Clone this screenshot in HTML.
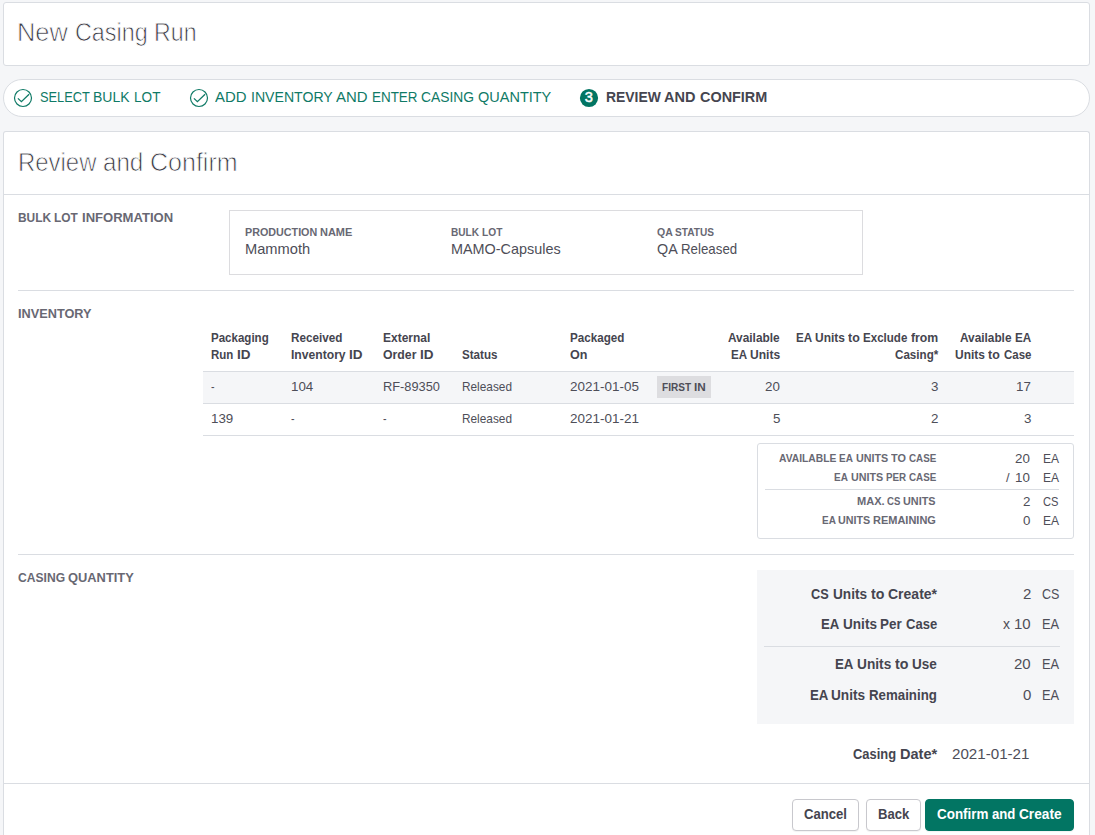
<!DOCTYPE html>
<html lang="en">
<head>
<meta charset="utf-8">
<title>New Casing Run</title>
<style>
*{box-sizing:border-box;margin:0;padding:0}
html,body{width:1095px;height:835px;overflow:hidden}
body{background:#f5f6f8;font-family:"Liberation Sans",sans-serif;color:#4e4e58;position:relative}
.tx{display:inline-block;white-space:nowrap}
.t{display:inline-block;white-space:pre;transform-origin:0 0}
.fx{display:flex;flex-direction:column;align-items:flex-start}
.ra>.fx,.ra9>.fx{align-items:flex-end}
.abs{position:absolute;white-space:nowrap}
.panel{position:absolute;left:3px;width:1087px;background:#fff;border:1px solid #dadde2;border-radius:3px}
#top{top:2px;height:64px}
h1,h2{font-weight:400;font-size:25px;line-height:30px;color:#383842;-webkit-text-stroke:0.75px #fff;paint-order:fill stroke;position:absolute;left:14px;white-space:nowrap}
h1{top:14px;left:12.8px}
h2{top:15px}
#steps{position:absolute;left:3px;top:79px;width:1087px;height:38px;background:#fff;border:1px solid #dadde2;border-radius:19px}
.step{position:absolute;top:8px;height:18px;line-height:18px;font-size:14.4px;color:#0f7a66;white-space:nowrap}
.step svg{position:absolute;top:0}
.step.cur{color:#45454f;font-weight:700}
#main{top:131px;height:720px;border-bottom:none;border-radius:3px 3px 0 0}
.hline{position:absolute;height:1px;background:#dadde2}
.sect{position:absolute;left:14px;font-size:12.8px;line-height:15px;font-weight:700;color:#686873;white-space:nowrap}
#bulk{position:absolute;left:225px;top:78px;width:634px;height:65px;border:1px solid #dcdcdf}
.fl{position:absolute;top:15px;font-size:11px;font-weight:700;color:#686873;white-space:nowrap;line-height:12px}
.fv{position:absolute;top:29px;font-size:14.4px;color:#4e4e58;white-space:nowrap;line-height:18px}
#inv{position:absolute;left:199px;top:194px;width:871px;table-layout:fixed;font-size:12.8px;border-collapse:separate;border-spacing:0}
#inv th{font-weight:700;color:#45454f;text-align:left;vertical-align:bottom;padding:0 0 8px 8px;line-height:16.5px;height:46px;border-bottom:1px solid #dadde2;white-space:nowrap}
#inv td{height:32px;padding:7px 0 0 8px;border-bottom:1px solid #dadde2;color:#4e4e58;white-space:nowrap;vertical-align:top;line-height:15px}
#inv tr.odd td{background:#f5f6f8}
#inv .ra{text-align:right;padding-right:8px;padding-left:0}
#inv .ra9{text-align:right;padding-right:43px;padding-left:0}
#inv td.bd{padding-top:4px}
.badge{display:block;width:54px;height:22px;line-height:22px;background:#dddde0;font-size:11px;font-weight:700;color:#4e4e58;padding-left:5px}
#sum{position:absolute;left:753px;top:311px;width:317px;height:96px;border:1px solid #dadde2;border-radius:3px}
.sl{position:absolute;right:137px;font-size:11px;font-weight:700;color:#686873;white-space:nowrap;line-height:12px}
.sv{position:absolute;right:43px;font-size:12.8px;color:#4e4e58;white-space:nowrap;line-height:15px}
.su{position:absolute;left:285px;font-size:12.8px;color:#4e4e58;white-space:nowrap;line-height:15px}
#cq{position:absolute;left:753px;top:438px;width:317px;height:154px;background:#f5f6f8}
#cq .sl{font-size:14.4px;color:#45454f;line-height:18px}
#cq .sv,#cq .su,.cd{font-size:14.4px;line-height:18px}
#cq .sv{right:43px}
#cq .su{left:285px}
.btn{position:absolute;top:667px;height:32px;line-height:28px;border:1px solid #c8c8cd;border-radius:4px;background:#fff;color:#45454f;font-size:14.4px;font-weight:700;padding-left:11px;white-space:nowrap;box-shadow:0 1px 1px rgba(0,0,0,.05)}
.btn.go{background:#027563;border-color:#027563;color:#fff}
</style>
</head>
<body>
<div class="panel" id="top"><h1><span class="tx"><span class="t" style="transform:scaleX(1.0159);margin-right:0.91px">New </span><span class="t" style="transform:scaleX(0.9343);margin-right:-5.57px">Casing </span><span class="t" style="transform:scaleX(0.9271);margin-right:-3.34px">Run</span></span></h1></div>

<div id="steps">
  <div class="step" style="left:36px">
    <svg style="left:-27px" width="20" height="20" viewBox="0 0 20 20"><circle cx="10" cy="10" r="8.5" fill="none" stroke="#0f7a66" stroke-width="1.2"/><path d="M4.9 10.4l3.5 3.3L16.1 6.2" fill="none" stroke="#0f7a66" stroke-width="1.3"/></svg>
    <span class="tx"><span class="t" style="transform:scaleX(0.8901);margin-right:-6.59px">SELECT </span><span class="t" style="transform:scaleX(0.9736);margin-right:-1.1px">BULK </span><span class="t" style="transform:scaleX(0.9456);margin-right:-1.52px">LOT</span></span></div>
  <div class="step" style="left:211px">
    <svg style="left:-26px" width="20" height="20" viewBox="0 0 20 20"><circle cx="10" cy="10" r="8.5" fill="none" stroke="#0f7a66" stroke-width="1.2"/><path d="M4.9 10.4l3.5 3.3L16.1 6.2" fill="none" stroke="#0f7a66" stroke-width="1.3"/></svg>
    <span class="tx"><span class="t" style="transform:scaleX(1.0369);margin-right:1.27px">ADD </span><span class="t" style="transform:scaleX(0.9802);margin-right:-1.73px">INVENTORY </span><span class="t" style="transform:scaleX(1.0382);margin-right:1.31px">AND </span><span class="t" style="transform:scaleX(0.9336);margin-right:-3.5px">ENTER </span><span class="t" style="transform:scaleX(0.9618);margin-right:-2.26px">CASING </span><span class="t" style="transform:scaleX(1.0074);margin-right:0.54px">QUANTITY</span></span></div>
  <div class="step cur" style="left:601.5px">
    <svg style="left:-26.5px" width="20" height="20" viewBox="0 0 20 20"><circle cx="10" cy="10" r="9.1" fill="#027563"/><text x="9.8" y="13.8" text-anchor="middle" font-family="Liberation Sans, sans-serif" font-size="14.6" font-weight="400" fill="#fff" stroke="#fff" stroke-width="0.5">3</text></svg>
    <span class="tx"><span class="t" style="transform:scaleX(0.9657);margin-right:-2.08px">REVIEW </span><span class="t" style="transform:scaleX(1.0099);margin-right:0.35px">AND </span><span class="t" style="transform:scaleX(1.0019);margin-right:0.13px">CONFIRM</span></span></div>
</div>

<div class="panel" id="main">
  <h2><span class="tx"><span class="t" style="transform:scaleX(0.9572);margin-right:-3.8px">Review </span><span class="t" style="transform:scaleX(0.9644);margin-right:-1.73px">and </span><span class="t" style="transform:scaleX(1.0008);margin-right:0.07px">Confirm</span></span></h2>
  <div class="hline" style="left:0;top:62px;width:1085px"></div>

  <div class="sect" style="top:78px"><span class="tx"><span class="t" style="transform:scaleX(0.9325);margin-right:-2.64px">BULK </span><span class="t" style="transform:scaleX(0.9311);margin-right:-2.01px">LOT </span><span class="t" style="transform:scaleX(1.0202);margin-right:1.8px">INFORMATION</span></span></div>
  <div id="bulk">
    <div class="fl" style="left:15px"><span class="tx"><span class="t" style="transform:scaleX(0.9769);margin-right:-1.78px">PRODUCTION </span><span class="t" style="transform:scaleX(0.9986);margin-right:-0.04px">NAME</span></span></div><div class="fv" style="left:15px"><span class="tx"><span class="t" style="transform:scaleX(1.0190);margin-right:1.22px">Mammoth</span></span></div>
    <div class="fl" style="left:221px"><span class="tx"><span class="t" style="transform:scaleX(0.9185);margin-right:-2.74px">BULK </span><span class="t" style="transform:scaleX(0.9249);margin-right:-1.65px">LOT</span></span></div><div class="fv" style="left:221px"><span class="tx"><span class="t" style="transform:scaleX(1.0008);margin-right:0.09px">MAMO-Capsules</span></span></div>
    <div class="fl" style="left:427px"><span class="tx"><span class="t" style="transform:scaleX(0.9549);margin-right:-0.88px">QA </span><span class="t" style="transform:scaleX(0.9189);margin-right:-3.44px">STATUS</span></span></div><div class="fv" style="left:427px"><span class="tx"><span class="t" style="transform:scaleX(0.9952);margin-right:-0.12px">QA </span><span class="t" style="transform:scaleX(0.9240);margin-right:-4.62px">Released</span></span></div>
  </div>
  <div class="hline" style="left:14px;top:158px;width:1056px"></div>

  <div class="sect" style="top:174px"><span class="tx"><span class="t" style="transform:scaleX(0.9948);margin-right:-0.39px">INVENTORY</span></span></div>
  <table id="inv">
    <colgroup><col style="width:80px"><col style="width:92px"><col style="width:79px"><col style="width:108px"><col style="width:87px"><col style="width:71px"><col style="width:68px"><col style="width:158px"><col style="width:128px"></colgroup>
    <thead><tr>
      <th><div class="fx"><span class="tx"><span class="t" style="transform:scaleX(0.9014);margin-right:-6.31px">Packaging</span></span><span class="tx"><span class="t" style="transform:scaleX(0.8975);margin-right:-2.91px">Run </span><span class="t" style="transform:scaleX(1.0570);margin-right:0.73px">ID</span></span></div></th>
      <th><div class="fx"><span class="tx"><span class="t" style="transform:scaleX(0.9149);margin-right:-4.78px">Received</span></span><span class="tx"><span class="t" style="transform:scaleX(0.9480);margin-right:-3.18px">Inventory </span><span class="t" style="transform:scaleX(1.0570);margin-right:0.73px">ID</span></span></div></th>
      <th><div class="fx"><span class="tx"><span class="t" style="transform:scaleX(0.9356);margin-right:-3.25px">External</span></span><span class="tx"><span class="t" style="transform:scaleX(0.9585);margin-right:-1.59px">Order </span><span class="t" style="transform:scaleX(1.0570);margin-right:0.73px">ID</span></span></div></th>
      <th><div class="fx"><span class="tx"><span class="t" style="transform:scaleX(0.9078);margin-right:-3.6px">Status</span></span></div></th>
      <th><div class="fx"><span class="tx"><span class="t" style="transform:scaleX(0.9114);margin-right:-5.3px">Packaged</span></span><span class="tx"><span class="t" style="transform:scaleX(0.9819);margin-right:-0.32px">On</span></span></div></th>
      <th></th>
      <th class="ra"><div class="fx"><span class="tx"><span class="t" style="transform:scaleX(0.9268);margin-right:-4.08px">Available</span></span><span class="tx"><span class="t" style="transform:scaleX(0.9073);margin-right:-1.98px">EA </span><span class="t" style="transform:scaleX(0.9422);margin-right:-1.85px">Units</span></span></div></th>
      <th class="ra"><div class="fx"><span class="tx"><span class="t" style="transform:scaleX(0.9073);margin-right:-1.98px">EA </span><span class="t" style="transform:scaleX(0.9354);margin-right:-2.29px">Units </span><span class="t" style="transform:scaleX(0.9704);margin-right:-0.46px">to </span><span class="t" style="transform:scaleX(0.9028);margin-right:-5.12px">Exclude </span><span class="t" style="transform:scaleX(0.9581);margin-right:-1.19px">from</span></span><span class="tx"><span class="t" style="transform:scaleX(0.9077);margin-right:-4.4px">Casing*</span></span></div></th>
      <th class="ra9"><div class="fx"><span class="tx"><span class="t" style="transform:scaleX(0.9237);margin-right:-4.52px">Available </span><span class="t" style="transform:scaleX(0.9139);margin-right:-1.53px">EA</span></span><span class="tx"><span class="t" style="transform:scaleX(0.9354);margin-right:-2.29px">Units </span><span class="t" style="transform:scaleX(0.9704);margin-right:-0.46px">to </span><span class="t" style="transform:scaleX(0.8962);margin-right:-3.18px">Case</span></span></div></th>
    </tr></thead>
    <tbody>
      <tr class="odd"><td><span class="tx"><span class="t" style="transform:scaleX(0.8367);margin-right:-0.7px">-</span></span></td><td><span class="tx"><span class="t" style="transform:scaleX(1.0429);margin-right:0.92px">104</span></span></td><td><span class="tx"><span class="t" style="transform:scaleX(1.0005);margin-right:0.03px">RF-89350</span></span></td><td><span class="tx"><span class="t" style="transform:scaleX(0.9240);margin-right:-4.11px">Released</span></span></td><td><span class="tx"><span class="t" style="transform:scaleX(1.0523);margin-right:3.43px">2021-01-05</span></span></td><td class="bd"><span class="badge"><span class="tx"><span class="t" style="transform:scaleX(0.9149);margin-right:-2.96px">FIRST </span><span class="t" style="transform:scaleX(1.0670);margin-right:0.74px">IN</span></span></span></td><td class="ra"><span class="tx"><span class="t" style="transform:scaleX(1.0429);margin-right:0.61px">20</span></span></td><td class="ra"><span class="tx"><span class="t" style="transform:scaleX(1.0429);margin-right:0.31px">3</span></span></td><td class="ra9"><span class="tx"><span class="t" style="transform:scaleX(1.0429);margin-right:0.61px">17</span></span></td></tr>
      <tr><td><span class="tx"><span class="t" style="transform:scaleX(1.0429);margin-right:0.92px">139</span></span></td><td><span class="tx"><span class="t" style="transform:scaleX(0.8367);margin-right:-0.7px">-</span></span></td><td><span class="tx"><span class="t" style="transform:scaleX(0.8367);margin-right:-0.7px">-</span></span></td><td><span class="tx"><span class="t" style="transform:scaleX(0.9240);margin-right:-4.11px">Released</span></span></td><td><span class="tx"><span class="t" style="transform:scaleX(1.0523);margin-right:3.43px">2021-01-21</span></span></td><td></td><td class="ra"><span class="tx"><span class="t" style="transform:scaleX(1.0429);margin-right:0.31px">5</span></span></td><td class="ra"><span class="tx"><span class="t" style="transform:scaleX(1.0429);margin-right:0.31px">2</span></span></td><td class="ra9"><span class="tx"><span class="t" style="transform:scaleX(1.0429);margin-right:0.31px">3</span></span></td></tr>
    </tbody>
  </table>

  <div id="sum">
    <div class="sl" style="top:8px"><span class="tx"><span class="t" style="transform:scaleX(0.9357);margin-right:-4.14px">AVAILABLE </span><span class="t" style="transform:scaleX(0.9073);margin-right:-1.7px">EA </span><span class="t" style="transform:scaleX(0.9761);margin-right:-0.86px">UNITS </span><span class="t" style="transform:scaleX(0.9870);margin-right:-0.24px">TO </span><span class="t" style="transform:scaleX(0.8925);margin-right:-3.29px">CASE</span></span></div><div class="sv" style="top:7px"><span class="tx"><span class="t" style="transform:scaleX(1.0429);margin-right:0.61px">20</span></span></div><div class="su" style="top:7px"><span class="tx"><span class="t" style="transform:scaleX(0.9404);margin-right:-1.02px">EA</span></span></div>
    <div class="sl" style="top:27px"><span class="tx"><span class="t" style="transform:scaleX(0.9073);margin-right:-1.7px">EA </span><span class="t" style="transform:scaleX(0.9761);margin-right:-0.86px">UNITS </span><span class="t" style="transform:scaleX(0.8912);margin-right:-2.79px">PER </span><span class="t" style="transform:scaleX(0.8925);margin-right:-3.29px">CASE</span></span></div><div class="sv" style="top:26px"><span class="tx"><span class="t" style="transform:scaleX(1.0000);margin-right:1.95px">/ </span><span class="t" style="transform:scaleX(1.0429);margin-right:0.61px">10</span></span></div><div class="su" style="top:26px"><span class="tx"><span class="t" style="transform:scaleX(0.9404);margin-right:-1.02px">EA</span></span></div>
    <div class="hline" style="left:7px;top:45px;width:294px"></div>
    <div class="sl" style="top:51px"><span class="tx"><span class="t" style="transform:scaleX(1.0046);margin-right:0.14px">MAX. </span><span class="t" style="transform:scaleX(0.8716);margin-right:-2.35px">CS </span><span class="t" style="transform:scaleX(0.9855);margin-right:-0.48px">UNITS</span></span></div><div class="sv" style="top:50px"><span class="tx"><span class="t" style="transform:scaleX(1.0429);margin-right:0.31px">2</span></span></div><div class="su" style="top:50px"><span class="tx"><span class="t" style="transform:scaleX(0.8714);margin-right:-2.29px">CS</span></span></div>
    <div class="sl" style="top:70px"><span class="tx"><span class="t" style="transform:scaleX(0.9073);margin-right:-1.7px">EA </span><span class="t" style="transform:scaleX(0.9761);margin-right:-0.86px">UNITS </span><span class="t" style="transform:scaleX(0.9992);margin-right:-0.05px">REMAINING</span></span></div><div class="sv" style="top:69px"><span class="tx"><span class="t" style="transform:scaleX(1.0429);margin-right:0.31px">0</span></span></div><div class="su" style="top:69px"><span class="tx"><span class="t" style="transform:scaleX(0.9404);margin-right:-1.02px">EA</span></span></div>
  </div>
  <div class="hline" style="left:14px;top:422px;width:1056px"></div>

  <div class="sect" style="top:437.5px"><span class="tx"><span class="t" style="transform:scaleX(0.9456);margin-right:-2.9px">CASING </span><span class="t" style="transform:scaleX(1.0061);margin-right:0.4px">QUANTITY</span></span></div>
  <div id="cq">
    <div class="sl" style="top:15px"><span class="tx"><span class="t" style="transform:scaleX(0.8847);margin-right:-2.77px">CS </span><span class="t" style="transform:scaleX(0.9495);margin-right:-2.02px">Units </span><span class="t" style="transform:scaleX(0.9849);margin-right:-0.26px">to </span><span class="t" style="transform:scaleX(0.9730);margin-right:-1.36px">Create*</span></span></div><div class="sv" style="top:15px"><span class="tx"><span class="t" style="transform:scaleX(1.0429);margin-right:0.34px">2</span></span></div><div class="su" style="top:15px"><span class="tx"><span class="t" style="transform:scaleX(0.8714);margin-right:-2.57px">CS</span></span></div>
    <div class="sl" style="top:45px"><span class="tx"><span class="t" style="transform:scaleX(0.9164);margin-right:-2.01px">EA </span><span class="t" style="transform:scaleX(0.9448);margin-right:-2.21px">Units </span><span class="t" style="transform:scaleX(0.9327);margin-right:-1.83px">Per </span><span class="t" style="transform:scaleX(0.9052);margin-right:-3.26px">Case</span></span></div><div class="sv" style="top:45px"><span class="tx"><span class="t" style="transform:scaleX(0.9694);margin-right:-0.34px">x </span><span class="t" style="transform:scaleX(1.0429);margin-right:0.69px">10</span></span></div><div class="su" style="top:45px"><span class="tx"><span class="t" style="transform:scaleX(0.8934);margin-right:-2.05px">EA</span></span></div>
    <div class="hline" style="left:7px;top:76px;width:296px"></div>
    <div class="sl" style="top:85px"><span class="tx"><span class="t" style="transform:scaleX(0.9236);margin-right:-1.83px">EA </span><span class="t" style="transform:scaleX(0.9523);margin-right:-1.91px">Units </span><span class="t" style="transform:scaleX(0.9878);margin-right:-0.21px">to </span><span class="t" style="transform:scaleX(0.9403);margin-right:-1.58px">Use</span></span></div><div class="sv" style="top:85px"><span class="tx"><span class="t" style="transform:scaleX(1.0429);margin-right:0.69px">20</span></span></div><div class="su" style="top:85px"><span class="tx"><span class="t" style="transform:scaleX(0.8934);margin-right:-2.05px">EA</span></span></div>
    <div class="sl" style="top:116px"><span class="tx"><span class="t" style="transform:scaleX(0.9200);margin-right:-1.92px">EA </span><span class="t" style="transform:scaleX(0.9485);margin-right:-2.06px">Units </span><span class="t" style="transform:scaleX(0.9229);margin-right:-5.67px">Remaining</span></span></div><div class="sv" style="top:116px"><span class="tx"><span class="t" style="transform:scaleX(1.0429);margin-right:0.34px">0</span></span></div><div class="su" style="top:116px"><span class="tx"><span class="t" style="transform:scaleX(0.8934);margin-right:-2.05px">EA</span></span></div>
  </div>
  <div class="abs cd" style="right:152px;top:613px;font-weight:700;color:#45454f"><span class="tx"><span class="t" style="transform:scaleX(0.8968);margin-right:-5.36px">Casing </span><span class="t" style="transform:scaleX(1.0113);margin-right:0.42px">Date*</span></span></div>
  <div class="abs cd" style="left:948px;top:613px"><span class="tx"><span class="t" style="transform:scaleX(1.0523);margin-right:3.85px">2021-01-21</span></span></div>

  <div class="hline" style="left:0;top:651px;width:1085px"></div>
  <div class="btn" style="left:788px;width:67px"><span class="tx"><span class="t" style="transform:scaleX(0.9113);margin-right:-4.19px">Cancel</span></span></div>
  <div class="btn" style="left:862px;width:55px"><span class="tx"><span class="t" style="transform:scaleX(0.9096);margin-right:-3.11px">Back</span></span></div>
  <div class="btn go" style="left:921px;width:149px"><span class="tx"><span class="t" style="transform:scaleX(0.9328);margin-right:-3.98px">Confirm </span><span class="t" style="transform:scaleX(0.9155);margin-right:-2.5px">and </span><span class="t" style="transform:scaleX(0.9493);margin-right:-2.27px">Create</span></span></div>
</div>
</body>
</html>
